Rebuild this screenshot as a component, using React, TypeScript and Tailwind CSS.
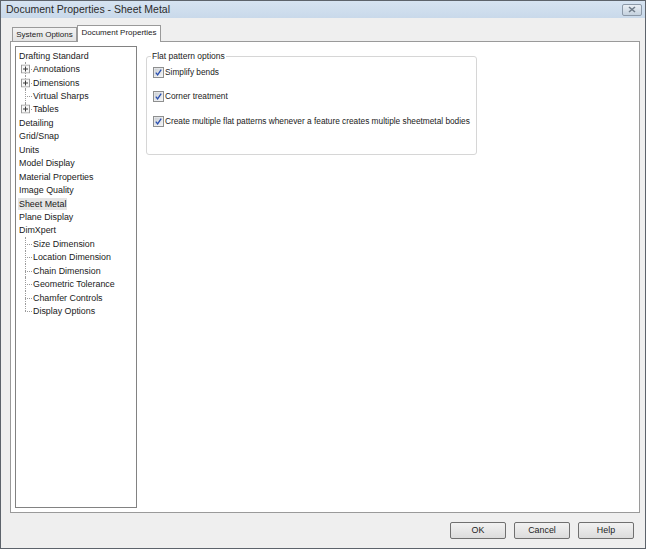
import React from 'react'

const treeItems: { label: string; level: 0 | 1; expander?: boolean; selected?: boolean }[] = [
  { label: 'Drafting Standard', level: 0 },
  { label: 'Annotations', level: 1, expander: true },
  { label: 'Dimensions', level: 1, expander: true },
  { label: 'Virtual Sharps', level: 1 },
  { label: 'Tables', level: 1, expander: true },
  { label: 'Detailing', level: 0 },
  { label: 'Grid/Snap', level: 0 },
  { label: 'Units', level: 0 },
  { label: 'Model Display', level: 0 },
  { label: 'Material Properties', level: 0 },
  { label: 'Image Quality', level: 0 },
  { label: 'Sheet Metal', level: 0, selected: true },
  { label: 'Plane Display', level: 0 },
  { label: 'DimXpert', level: 0 },
  { label: 'Size Dimension', level: 1 },
  { label: 'Location Dimension', level: 1 },
  { label: 'Chain Dimension', level: 1 },
  { label: 'Geometric Tolerance', level: 1 },
  { label: 'Chamfer Controls', level: 1 },
  { label: 'Display Options', level: 1 },
]

function CheckBox() {
  return (
    <svg width="11" height="11" viewBox="0 0 11 11" className="shrink-0">
      <defs>
        <linearGradient id="cbg" x1="0" y1="0" x2="1" y2="1">
          <stop offset="0" stopColor="#c9cdd2" />
          <stop offset="1" stopColor="#f4f5f6" />
        </linearGradient>
      </defs>
      <rect x="0.5" y="0.5" width="10" height="10" fill="#f2f3f4" stroke="#8e8f8f" />
      <rect x="1.5" y="1.5" width="8" height="8" fill="url(#cbg)" />
      <path d="M2.8 5.6 L4.6 7.8 L8.2 2.6" fill="none" stroke="#2a4fb0" strokeWidth="1.3" />
    </svg>
  )
}

function Expander() {
  return (
    <svg width="9" height="9" viewBox="0 0 9 9" className="shrink-0">
      <rect x="0.5" y="0.5" width="8" height="8" fill="#f7f7f7" stroke="#9a9a9a" />
      <path d="M2 4.5 H7 M4.5 2 V7" stroke="#3b3b3b" strokeWidth="1" />
    </svg>
  )
}

function OptionRow({ label }: { label: string }) {
  return (
    <div className="flex items-center gap-[1px] h-[12px] whitespace-nowrap text-[8.3px]">
      <CheckBox />
      <span>{label}</span>
    </div>
  )
}

function DialogButton({ label }: { label: string }) {
  return (
    <button className="w-[56px] h-[17px] border border-[#707070] rounded-[2px] bg-gradient-to-b from-[#f2f2f2] to-[#dcdcdc] text-[#1e1e1e] leading-none">
      {label}
    </button>
  )
}

export default function App() {
  return (
    <div className="w-[646px] h-[549px] flex flex-col bg-[#efefef] border border-[#5d636b] font-['Liberation_Sans',sans-serif] text-[8.9px] text-[#1a1a1a] overflow-hidden">
      {/* title bar */}
      <div className="h-[17px] shrink-0 flex items-center justify-between pl-[5px] pr-[3px] bg-gradient-to-b from-[#d6e3f1] to-[#c9d9ea] text-[#2b2b2b] text-[10.5px]">
        <span>Document Properties - Sheet Metal</span>
        <div className="w-[20px] h-[12px] border border-[#8c99a8] rounded-[2px] bg-gradient-to-b from-[#e9eef4] to-[#c5d2df] flex items-center justify-center">
          <svg width="8" height="7" viewBox="0 0 8 7">
            <path d="M1 1 L7 6 M7 1 L1 6" stroke="#6f7b88" strokeWidth="1.6" />
          </svg>
        </div>
      </div>

      <div className="flex-1 flex flex-col pl-[9px] pr-[5px] pt-[6px]">
        {/* tabs */}
        <div className="flex items-end h-[17px] pl-[2px] relative z-10 text-[8px] whitespace-nowrap">
          <div className="w-[65px] h-[14px] flex items-center justify-center border border-b-0 border-[#9a9a9a] bg-gradient-to-b from-[#f3f3f3] to-[#e3e3e3] text-[#222]">
            System Options
          </div>
          <div className="w-[84px] h-[17px] pb-[2px] flex items-center justify-center border border-b-0 border-[#9a9a9a] bg-white -mb-[1px]">
            Document Properties
          </div>
        </div>

        {/* panel */}
        <div className="h-[472px] bg-white border border-[#9a9a9a] flex gap-[9px] p-[4px] pr-[3px]">
          {/* tree */}
          <div className="w-[122px] h-[462px] border border-[#828282] bg-white pt-[2px] pl-[2px] whitespace-nowrap">
            {treeItems.map((item, i) => {
              const last = i === 4 || i === treeItems.length - 1
              return (
                <div key={item.label} className="h-[13.45px] flex items-center relative">
                  {item.level === 1 && (
                    <div className="w-[11px] h-full relative shrink-0 ml-[3px]">
                      <div
                        className={
                          'absolute left-[4px] top-0 border-l border-dotted border-[#9b9b9b] ' +
                          (last ? 'h-1/2' : 'h-full')
                        }
                      />
                      <div className="absolute left-[4px] top-1/2 w-[7px] border-t border-dotted border-[#9b9b9b]" />
                      {item.expander && (
                        <div className="absolute left-0 top-1/2 -translate-y-1/2">
                          <Expander />
                        </div>
                      )}
                    </div>
                  )}
                  <span
                    className={
                      'px-[1px] leading-[12px] ' + (item.selected ? 'bg-[#e5e5e5]' : '')
                    }
                  >
                    {item.label}
                  </span>
                </div>
              )
            })}
          </div>

          {/* group box */}
          <div className="pt-[10px]">
            <div className="relative w-[331px] h-[99px] border border-[#d6d6d6] rounded-[3px] pl-[6px] pt-[9px]">
              <span className="absolute -top-[6px] left-[4px] bg-white px-[1px] leading-[11px] text-[8.5px]">
                Flat pattern options
              </span>
              <div className="flex flex-col gap-[12.5px]">
                <OptionRow label="Simplify bends" />
                <OptionRow label="Corner treatment" />
                <OptionRow label="Create multiple flat patterns whenever a feature creates multiple sheetmetal bodies" />
              </div>
            </div>
          </div>
        </div>

        {/* buttons */}
        <div className="flex justify-end gap-[8px] pt-[9px] pr-[6px]">
          <DialogButton label="OK" />
          <DialogButton label="Cancel" />
          <DialogButton label="Help" />
        </div>
      </div>
    </div>
  )
}
